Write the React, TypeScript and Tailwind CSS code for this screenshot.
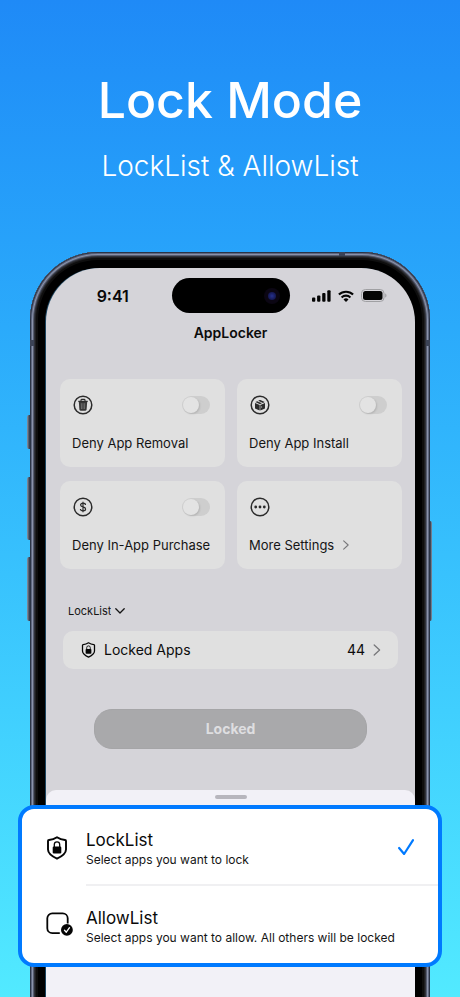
import { useState } from "react";
import type { ReactNode } from "react";

type Mode = "lock" | "allow";

function Wifi() {
  return (
    <svg viewBox="0 0 16 12" className="h-3 w-4" fill="none" stroke="#050505" strokeWidth="2.1" aria-hidden="true">
      <path d="M.9 4.6a10.2 10.2 0 0 1 14.2 0" />
      <path d="M3.6 7.4a6.4 6.4 0 0 1 8.8 0" />
      <path d="M8 11.9 5.5 9.4a3.6 3.6 0 0 1 5 0z" fill="#050505" stroke="none" />
    </svg>
  );
}

function Signal() {
  return (
    <svg viewBox="0 0 19 12" className="h-3 w-[19px]" fill="#050505" aria-hidden="true">
      <rect x="0" y="7.4" width="3.3" height="4.4" rx="1" />
      <rect x="5.1" y="5.4" width="3.3" height="6.4" rx="1" />
      <rect x="10.2" y="3" width="3.3" height="8.8" rx="1" />
      <rect x="15.3" y="0.2" width="3.3" height="11.6" rx="1" />
    </svg>
  );
}

function Battery() {
  return (
    <svg viewBox="0 0 26 13" className="h-[13px] w-[26px]" aria-hidden="true">
      <rect x="0.5" y="0.5" width="22.5" height="12" rx="3.8" fill="none" stroke="#a0a0a3" />
      <rect x="2" y="2" width="19.5" height="9" rx="2.5" fill="#050505" />
      <path d="M24.2 4.4v4.2c.8-.3 1.3-1.1 1.3-2.1s-.5-1.8-1.3-2.1z" fill="#a0a0a3" />
    </svg>
  );
}

function Ring({ children }: { children: ReactNode }) {
  return (
    <svg viewBox="0 0 20 20" className="size-5" fill="none" stroke="#2b2b2b" aria-hidden="true">
      <circle cx="10" cy="10" r="8.8" strokeWidth="1.5" />
      {children}
    </svg>
  );
}

function TrashIcon() {
  return (
    <Ring>
      <path d="M5.3 6.4h9.4M8 6V5.2c0-.5.3-.8.8-.8h2.4c.5 0 .8.3.8.8V6" strokeWidth="1.1" />
      <path d="M5.8 6.8h8.400l-.6 7.800c-.1.8-.5 1.100-1.200 1.100H7.600c-.7 0-1.100-.3-1.200-1.100z" fill="#363636" stroke="none" />
      <path d="M8.300 8.200l.2 5.800M10 8.200V14M11.700 8.200l-.2 5.800" stroke="#8f8f8f" strokeWidth=".6" />
    </Ring>
  );
}

function BoxIcon() {
  return (
    <Ring>
      <path d="M5 7.900 9.700 9.900v5.700L5.500 13.700c-.3-.2-.5-.4-.5-.8zM15 7.900l-4.700 2v5.700l4.200-1.900c.3-.2.5-.4.5-.8z" fill="#2b2b2b" stroke="none" />
      <path d="M5.300 7.100l1.900-.9 4.700 2.100-1.900.9zM8.200 5.700l1.400-.7c.3-.1.500-.1.800 0l4.300 2.100-1.700.8z" fill="#2b2b2b" stroke="none" />
      <path d="M11.600 11.200v1.600" stroke="#c8c8c8" strokeWidth=".7" />
    </Ring>
  );
}

function DollarIcon() {
  return (
    <Ring>
      <path d="M12.500 8c-.1-1.200-1.100-1.800-2.500-1.800S7.600 6.900 7.600 8c0 2.500 5 1.300 5 4 0 1.200-1.100 1.900-2.600 1.900s-2.500-.7-2.600-1.900M10 4.700v10.600" strokeWidth="1.200" />
    </Ring>
  );
}

function MoreIcon() {
  return (
    <Ring>
      <g fill="#2b2b2b" stroke="none">
        <circle cx="5.700" cy="10" r="1.400" />
        <circle cx="10" cy="10" r="1.400" />
        <circle cx="14.300" cy="10" r="1.400" />
      </g>
    </Ring>
  );
}

function ShieldLock({ className }: { className: string }) {
  return (
    <svg viewBox="0 0 22 24" className={className} fill="none" stroke="#050505" aria-hidden="true">
      <path d="M11 1.200c2.500 1.700 5.300 2.600 8 2.800.7.100 1 .4 1 1v8.500c0 4-3.600 6.600-9 9.200-5.400-2.600-9-5.200-9-9.200V5c0-.6.300-.9 1-1 2.700-.2 5.500-1.100 8-2.800z" strokeWidth="1.900" strokeLinejoin="round" />
      <path d="M8.300 11V8.500a2.700 2.700 0 0 1 5.400 0V11" strokeWidth="1.300" />
      <rect x="6.700" y="10.600" width="8.600" height="6.900" rx="1.100" fill="#050505" stroke="none" />
    </svg>
  );
}

function SquareCheck() {
  return (
    <svg viewBox="0 0 27 24" className="-mt-0.5 h-6 w-[27px]" fill="none" aria-hidden="true">
      <path d="M13.800 21.200H6.300a5 5 0 0 1-5-5V6.300a5 5 0 0 1 5-5h10.400a5 5 0 0 1 5 5v5.200" stroke="#050505" strokeWidth="1.800" />
      <circle cx="20.900" cy="17.900" r="5.900" fill="#050505" />
      <path d="m18.500 18.200 1.800 2 3.200-4.500" stroke="#fff" strokeWidth="1.300" strokeLinecap="round" strokeLinejoin="round" />
    </svg>
  );
}

function ChevronRight({ className }: { className: string }) {
  return (
    <svg viewBox="0 0 8 12" className={className} fill="none" stroke="#77777a" strokeWidth="1.300" strokeLinecap="round" strokeLinejoin="round" aria-hidden="true">
      <path d="m1.200 1 5.400 5-5.400 5" />
    </svg>
  );
}

function SettingCard({ label, icon }: { label: string; icon: ReactNode }) {
  return (
    <label className="flex h-22 flex-col justify-between rounded-[10px] bg-[#e0e0e0] px-3 pt-4 pb-3.5">
      <span className="flex items-center justify-between pr-[3px] pl-px">
        {icon}
        <input
          type="checkbox"
          role="switch"
          className="h-[18px] w-7 appearance-none rounded-full bg-[#cecece] p-px before:block before:size-4 before:rounded-full before:bg-[#e3e3e3] before:shadow-[1px_1px_2px_#00000022] checked:bg-[#34c759] checked:before:translate-x-2.5"
        />
      </span>
      <span className="text-[13px] leading-5 whitespace-nowrap text-[#151515]">{label}</span>
    </label>
  );
}

interface OptionProps {
  id: Mode;
  title: string;
  detail: string;
  icon: ReactNode;
  mode: Mode;
  onPick: (mode: Mode) => void;
}

function Option({ id, title, detail, icon, mode, onPick }: OptionProps) {
  return (
    <label className="flex items-center pl-6">
      <span className="flex w-10 shrink-0">{icon}</span>
      <span className={`flex h-[77px] flex-1 items-center justify-between pr-6 ${id === "lock" ? "border-b-2 border-[#f0f0f2]" : ""}`}>
        <span className="flex flex-col pt-1.5">
          <span className="text-[17px] leading-5 text-[#0a0a0a]">{title}</span>
          <span className="text-[12px] leading-5 whitespace-nowrap text-[#151515]">{detail}</span>
        </span>
        <input type="radio" name="mode" className="sr-only" checked={mode === id} onChange={() => onPick(id)} />
        {mode === id && (
          <svg viewBox="0 0 16 16" className="size-4 shrink-0" fill="none" stroke="#007aff" strokeWidth="2.2" strokeLinecap="round" strokeLinejoin="round" aria-hidden="true">
            <path d="m1.100 9 5 6L15 1.200" />
          </svg>
        )}
      </span>
    </label>
  );
}

export default function App() {
  const [mode, setMode] = useState<Mode>("lock");

  return (
    <main className="flex min-h-screen flex-col overflow-hidden bg-linear-to-b from-[#1f8af7] to-[#52eaff] font-['Inter','Liberation_Sans',sans-serif]">
      <header className="flex h-[252px] flex-col items-center pt-[68px] text-white">
        <h1 className="text-[50px] leading-16 font-medium whitespace-nowrap">Lock Mode</h1>
        <p className="mt-3 text-[28px] leading-11 font-light whitespace-nowrap">LockList &amp; AllowList</p>
      </header>

      <section className="relative mx-[30px] -mb-10 flex flex-1 flex-col rounded-t-[68px] bg-black pt-4 pr-[15px] pl-4 shadow-[inset_0_0_0_1px_#2b3446,inset_0_0_0_2px_#5d6780,inset_0_0_0_3px_#8a92aa,inset_0_0_0_4px_#565d70,inset_0_0_0_5px_#30323a,inset_0_0_0_6px_#1f1f21,inset_0_0_0_8px_#0e0e0e]">
        <i className="absolute top-[163px] right-full h-[34px] w-[3px] rounded-l-xs bg-linear-to-r from-[#8d97a5] to-[#263043]" />
        <i className="absolute top-[225px] right-full h-[63px] w-[3px] rounded-l-xs bg-linear-to-r from-[#8d97a5] to-[#263043]" />
        <i className="absolute top-[305px] right-full h-[64px] w-[3px] rounded-l-xs bg-linear-to-r from-[#8d97a5] to-[#263043]" />
        <i className="absolute top-[269px] left-full h-[100px] w-0.5 rounded-r-xs bg-linear-to-l from-[#8d97a5] to-[#263043]" />
        <i className="absolute top-[88px] left-0 h-1.5 w-1 bg-[#3b4356]" />
        <i className="absolute top-[88px] right-0 h-1.5 w-1 bg-[#3b4356]" />
        <i className="absolute top-0 right-[85px] h-1 w-1.5 bg-[#3b4356]" />

        <div className="flex flex-1 flex-col rounded-t-[54px] bg-[#d5d4d9] shadow-[-1px_0_0_#1c4560]">
          <div className="grid grid-cols-[1fr_118px_1fr] items-center pt-2.5">
            <time className="justify-self-center pl-2 text-base leading-5 font-semibold text-[#080808]">9:41</time>
            <div className="flex h-[35px] items-center justify-end rounded-full bg-black pr-2.5">
              <span className="flex size-4 items-center justify-center rounded-full bg-[#0b0613]">
                <span className="size-2 rounded-full bg-radial from-[#27328f] to-[#0c0c38]" />
              </span>
            </div>
            <div className="flex items-center gap-[7px] justify-self-center pr-1.5">
              <Signal />
              <Wifi />
              <Battery />
            </div>
          </div>

          <h2 className="pt-2.5 text-center text-[14px] leading-5 font-semibold text-[#0c0c0c]">AppLocker</h2>

          <div className="mt-9 grid grid-cols-2 gap-x-3 gap-y-3.5 pr-[13px] pl-3.5">
            <SettingCard label="Deny App Removal" icon={<TrashIcon />} />
            <SettingCard label="Deny App Install" icon={<BoxIcon />} />
            <SettingCard label="Deny In-App Purchase" icon={<DollarIcon />} />
            <button type="button" className="flex h-22 flex-col items-start justify-between rounded-[10px] bg-[#e0e0e0] px-3 pt-4 pb-3.5">
              <span className="pl-px">
                <MoreIcon />
              </span>
              <span className="flex items-center gap-2 text-[13px] leading-5 whitespace-nowrap text-[#151515]">
                More Settings
                <ChevronRight className="h-2.5 w-2" />
              </span>
            </button>
          </div>

          <label className="mt-8 ml-[22px] flex items-center gap-1 self-start text-[#151515]">
            <select
              aria-label="List mode"
              value={mode}
              onChange={(e) => setMode(e.target.value as Mode)}
              className="field-sizing-content appearance-none bg-transparent text-[11px] leading-5"
            >
              <option value="lock">LockList</option>
              <option value="allow">AllowList</option>
            </select>
            <svg viewBox="0 0 10 6" className="h-1.5 w-2.5" fill="none" stroke="#151515" strokeWidth="1.300" strokeLinecap="round" strokeLinejoin="round" aria-hidden="true">
              <path d="m.8.8 4.200 4.200L9.200.8" />
            </svg>
          </label>

          <button type="button" className="mx-[17px] mt-2.5 flex h-[38px] items-center rounded-[10px] bg-[#e0e0e0] pr-[17px] pl-[18px] text-[#0c0c0c]">
            <ShieldLock className="h-4 w-[15px]" />
            <span className="ml-2 text-sm">Locked Apps</span>
            <span className="mr-2 ml-auto text-sm">44</span>
            <ChevronRight className="h-3 w-2" />
          </button>

          <button type="button" className="mx-12 mt-10 h-10 rounded-[18px] border border-[#a5a5a7] bg-[#a9a9ab] text-sm font-bold text-[#dedee0]">
            Locked
          </button>

          <div className="mt-[41px] flex-1 rounded-t-[10px] bg-[#f2f1f7] pb-[70px]">
            <div className="flex h-[15px] justify-center pt-[5px]">
              <span className="h-1 w-8 rounded-full bg-[#b7b6bd]" />
            </div>
            <div role="radiogroup" aria-label="Lock mode" className="relative -mr-[27px] -ml-7 rounded-2xl border-4 border-[#007aff] bg-white">
              <Option
                id="lock"
                title="LockList"
                detail="Select apps you want to lock"
                icon={<ShieldLock className="h-6 w-[22px]" />}
                mode={mode}
                onPick={setMode}
              />
              <Option
                id="allow"
                title="AllowList"
                detail="Select apps you want to allow. All others will be locked"
                icon={<SquareCheck />}
                mode={mode}
                onPick={setMode}
              />
            </div>
          </div>
        </div>
      </section>
    </main>
  );
}
